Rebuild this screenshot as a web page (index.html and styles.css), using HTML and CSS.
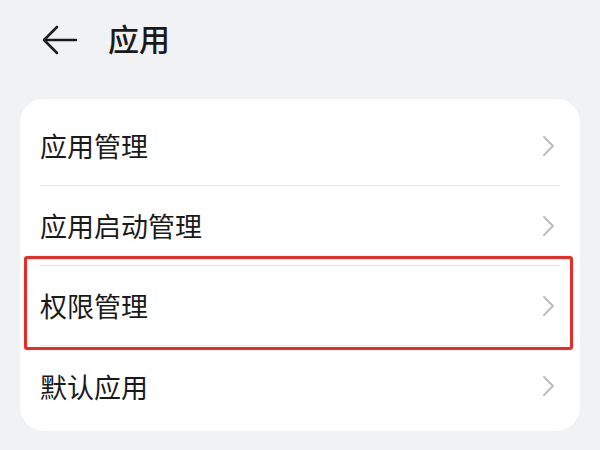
FILE: index.html
```html
<!DOCTYPE html>
<html lang="zh-CN">
<head>
  <meta charset="UTF-8" />
  <title>应用</title>
  <link rel="stylesheet" href="styles.css">
</head>
<body>
  <div class="page">
    <div class="header">
      <svg class="back" width="36" height="32" viewBox="0 0 36 32">
        <path d="M15 3 L2 16 L15 29 M2 16 H34" fill="none" stroke="#1a1a1a" stroke-width="2.6" stroke-linecap="round" stroke-linejoin="round"/>
      </svg>
      <div class="title">应用</div>
    </div>

    <div class="card">
      <div class="row">
        <span class="label">应用管理</span>
        <svg class="chev" width="14" height="22" viewBox="0 0 14 22"><path d="M2 2 L11 11 L2 20" fill="none" stroke="#bdbdbd" stroke-width="2" stroke-linecap="round" stroke-linejoin="round"/></svg>
      </div>
      <div class="row">
        <span class="label">应用启动管理</span>
        <svg class="chev" width="14" height="22" viewBox="0 0 14 22"><path d="M2 2 L11 11 L2 20" fill="none" stroke="#bdbdbd" stroke-width="2" stroke-linecap="round" stroke-linejoin="round"/></svg>
      </div>
      <div class="row">
        <span class="label">权限管理</span>
        <svg class="chev" width="14" height="22" viewBox="0 0 14 22"><path d="M2 2 L11 11 L2 20" fill="none" stroke="#bdbdbd" stroke-width="2" stroke-linecap="round" stroke-linejoin="round"/></svg>
        <div class="highlight"></div>
      </div>
      <div class="row">
        <span class="label">默认应用</span>
        <svg class="chev" width="14" height="22" viewBox="0 0 14 22"><path d="M2 2 L11 11 L2 20" fill="none" stroke="#bdbdbd" stroke-width="2" stroke-linecap="round" stroke-linejoin="round"/></svg>
      </div>
    </div>
  </div>
</body>
</html>
```

FILE: styles.css
```css
* {
  margin: 0;
  padding: 0;
  box-sizing: border-box;
}

body {
  width: 600px;
  height: 450px;
  overflow: hidden;
  background-color: #f1f2f4;
  font-family: "Noto Sans CJK SC", "Noto Sans", sans-serif;
  color: #1a1a1a;
}

.page {
  padding: 0 20px;
}

.header {
  height: 99px;
  display: flex;
  align-items: center;
  padding-left: 22px;
  padding-bottom: 24px;
}

.back {
  display: block;
  margin-top: 4px;
}

.title {
  margin-left: 30px;
  font-size: 31px;
  font-weight: 500;
  line-height: 1;
}

.card {
  background-color: #ffffff;
  border-radius: 24px;
  padding: 7px 20px 5px;
}

.row {
  position: relative;
  height: 80px;
  display: flex;
  align-items: center;
  justify-content: space-between;
  border-bottom: 1px solid #e6e6e8;
}

.row:last-child {
  border-bottom: none;
}

.label {
  font-size: 27px;
  line-height: 1;
}

.chev {
  display: block;
  margin-right: 4px;
}

.highlight {
  position: absolute;
  left: -16px;
  right: -13px;
  top: -10px;
  bottom: -5px;
  border: 3px solid #ee2a24;
  border-radius: 3px;
}
```
